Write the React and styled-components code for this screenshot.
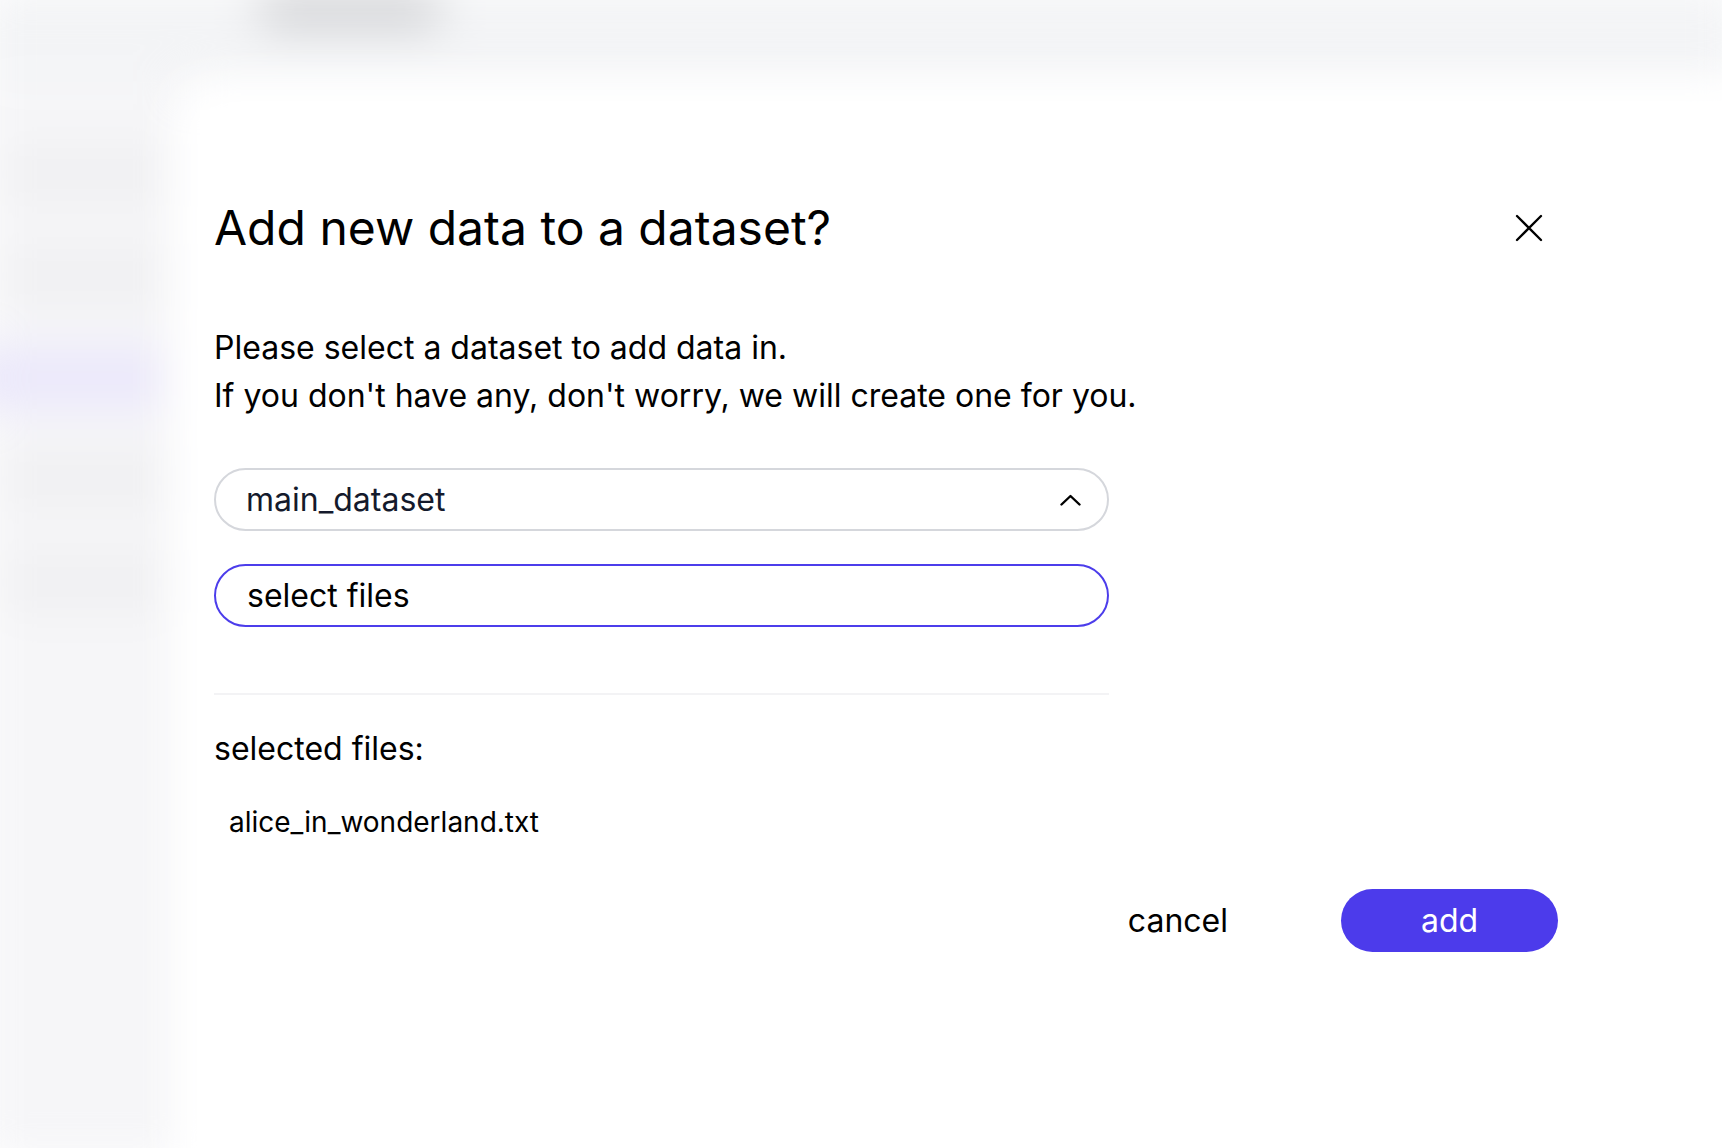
import React from 'react'
import styled, { createGlobalStyle } from 'styled-components'

const GlobalStyle = createGlobalStyle`
  html, body {
    margin: 0;
    padding: 0;
    background: #ffffff;
    font-family: Inter, "Noto Sans", "Liberation Sans", sans-serif;
    color: #000;
  }
  * { box-sizing: border-box; }
`

const Page = styled.div`
  position: relative;
  width: 100vw;
  height: 100vh;
  overflow: hidden;
  background: #fff;
`

// blurred app behind the modal
const Backdrop = styled.div`
  display: grid;
  grid-template-rows: 92px 1fr;
  height: 100%;
  filter: blur(22px);
  transform: scale(1.02);
`
const TopBar = styled.div`
  background: #f3f4f6;
  display: flex;
  align-items: flex-start;
  padding: 0 0 0 270px;
`
const LogoBlob = styled.div`
  width: 180px;
  height: 40px;
  border-radius: 18px;
  background: #d2d3d6;
`
const Body = styled.div`
  display: flex;
`
const Sidebar = styled.div`
  width: 200px;
  background: #f6f6f8;
  display: flex;
  flex-direction: column;
  gap: 40px;
  padding: 60px 20px;
`
const SideItem = styled.div`
  height: 60px;
  border-radius: 12px;
  background: ${p => (p.active ? '#ebe8fb' : '#f0f0f2')};
  margin-left: ${p => (p.active ? '-40px' : '0')};
`

const Dialog = styled.div`
  position: absolute;
  top: 110px;
  left: 200px;
  right: -60px;
  bottom: -60px;
  background: #ffffff;
  box-shadow: 0 0 50px 20px #ffffff;
  padding: 90px 0 0 14px;
`
const Content = styled.div`
  width: 1344px;
  display: flex;
  flex-direction: column;
`
const Header = styled.div`
  display: flex;
  justify-content: space-between;
  align-items: center;
  height: 56px;
  padding-right: 14px;
`
const Title = styled.h1`
  margin: 0;
  font-size: 48px;
  line-height: 56px;
  font-weight: 400;
  letter-spacing: 0;
`
const CloseButton = styled.button`
  border: none;
  background: none;
  padding: 0;
  width: 30px;
  height: 30px;
  display: flex;
  align-items: center;
  justify-content: center;
  cursor: pointer;
`
const Text = styled.p`
  margin: 68px 0 0;
  font-size: 32px;
  line-height: 48px;
`
const Form = styled.div`
  width: 895px;
  display: flex;
  flex-direction: column;
  gap: 33px;
  margin-top: 48px;
`
const Field = styled.div`
  height: 63px;
  border-radius: 32px;
  border: 2px solid ${p => (p.focus ? '#4c3deb' : '#d5d7dc')};
  display: flex;
  align-items: center;
  justify-content: space-between;
  padding: 0 26px 0 ${p => (p.focus ? '31px' : '30px')};
  font-size: 32px;
  color: ${p => (p.focus ? '#000' : '#141a2c')};
`
const Divider = styled.hr`
  width: 895px;
  border: none;
  height: 2px;
  background: #f3f3f5;
  margin: 66px 0 0;
`
const Label = styled.div`
  margin-top: 34px;
  font-size: 32px;
  line-height: 40px;
`
const FileName = styled.div`
  margin-top: 36px;
  padding-left: 15px;
  font-size: 28px;
  line-height: 34px;
`
const Actions = styled.div`
  display: flex;
  justify-content: flex-end;
  align-items: center;
  gap: 89px;
  margin-top: 50px;
`
const Button = styled.button`
  height: 63px;
  border: none;
  border-radius: 32px;
  font-family: inherit;
  font-size: 32px;
  cursor: pointer;
  padding: ${p => (p.primary ? '0' : '0 24px')};
  width: ${p => (p.primary ? '217px' : 'auto')};
  background: ${p => (p.primary ? '#4c3beb' : 'transparent')};
  color: ${p => (p.primary ? '#fff' : '#000')};
`

const App = () => {
  return (
    <Page>
      <GlobalStyle />
      <Backdrop>
        <TopBar>
          <LogoBlob />
        </TopBar>
        <Body>
          <Sidebar>
            <SideItem />
            <SideItem />
            <SideItem active />
            <SideItem />
            <SideItem />
          </Sidebar>
        </Body>
      </Backdrop>

      <Dialog>
        <Content>
          <Header>
            <Title>Add new data to a dataset?</Title>
            <CloseButton aria-label="close">
              <svg width="28" height="28" viewBox="0 0 28 28" fill="none">
                <path d="M2 2L26 26M26 2L2 26" stroke="#000" strokeWidth="2.3" strokeLinecap="round" />
              </svg>
            </CloseButton>
          </Header>
          <Text>
            Please select a dataset to add data in.
            <br />
            If you don't have any, don't worry, we will create one for you.
          </Text>
          <Form>
            <Field>
              main_dataset
              <svg width="21" height="12" viewBox="0 0 21 12" fill="none">
                <polyline points="1.5,10.5 10.5,2 19.5,10.5" stroke="#000" strokeWidth="2.4" strokeLinecap="round" strokeLinejoin="round" />
              </svg>
            </Field>
            <Field focus>select files</Field>
          </Form>
          <Divider />
          <Label>selected files:</Label>
          <FileName>alice_in_wonderland.txt</FileName>
          <Actions>
            <Button>cancel</Button>
            <Button primary>add</Button>
          </Actions>
        </Content>
      </Dialog>
    </Page>
  )
}

export default App
